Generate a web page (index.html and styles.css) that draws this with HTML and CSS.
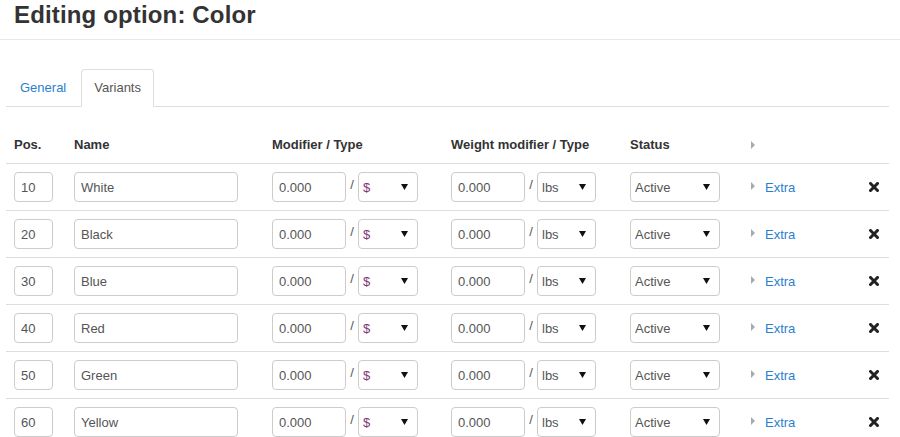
FILE: index.html
```html
<!DOCTYPE html>
<html lang="en">
<head>
<meta charset="utf-8">
<title>Editing option: Color</title>
<link rel="stylesheet" href="styles.css">
</head>
<body>
<header class="page-head">
  <h1 class="page-title">Editing option: Color</h1>
</header>
<main class="content">
  <ul class="tabs">
    <li class="tab"><a href="#" class="tab-link">General</a></li>
    <li class="tab active"><a href="#" class="tab-link">Variants</a></li>
  </ul>
  <table class="variants">
    <colgroup>
      <col class="c-pos"><col class="c-name"><col class="c-mod"><col class="c-wmod"><col class="c-status"><col class="c-extra"><col class="c-del">
    </colgroup>
    <thead>
      <tr>
        <th>Pos.</th>
        <th>Name</th>
        <th>Modifier / Type</th>
        <th>Weight modifier / Type</th>
        <th>Status</th>
        <th><span class="caret"></span></th>
        <th></th>
      </tr>
    </thead>
    <tbody>
      <tr>
        <td><input class="inp pos" value="10"></td>
        <td><input class="inp name" value="White"></td>
        <td><div class="pair"><input class="inp mod" value="0.000"><span class="slash">/</span><select class="sel cur"><option>$</option></select></div></td>
        <td><div class="pair"><input class="inp mod" value="0.000"><span class="slash">/</span><select class="sel unit"><option>lbs</option></select></div></td>
        <td><select class="sel status"><option>Active</option></select></td>
        <td><span class="caret"></span><a href="#" class="extra">Extra</a></td>
        <td><span class="del"><svg viewBox="0 0 10 10" width="10" height="10"><path d="M1.5 1.5L8.5 8.5M8.5 1.5L1.5 8.5" stroke="#222" stroke-width="3" stroke-linecap="square"/></svg></span></td>
      </tr>
      <tr>
        <td><input class="inp pos" value="20"></td>
        <td><input class="inp name" value="Black"></td>
        <td><div class="pair"><input class="inp mod" value="0.000"><span class="slash">/</span><select class="sel cur"><option>$</option></select></div></td>
        <td><div class="pair"><input class="inp mod" value="0.000"><span class="slash">/</span><select class="sel unit"><option>lbs</option></select></div></td>
        <td><select class="sel status"><option>Active</option></select></td>
        <td><span class="caret"></span><a href="#" class="extra">Extra</a></td>
        <td><span class="del"><svg viewBox="0 0 10 10" width="10" height="10"><path d="M1.5 1.5L8.5 8.5M8.5 1.5L1.5 8.5" stroke="#222" stroke-width="3" stroke-linecap="square"/></svg></span></td>
      </tr>
      <tr>
        <td><input class="inp pos" value="30"></td>
        <td><input class="inp name" value="Blue"></td>
        <td><div class="pair"><input class="inp mod" value="0.000"><span class="slash">/</span><select class="sel cur"><option>$</option></select></div></td>
        <td><div class="pair"><input class="inp mod" value="0.000"><span class="slash">/</span><select class="sel unit"><option>lbs</option></select></div></td>
        <td><select class="sel status"><option>Active</option></select></td>
        <td><span class="caret"></span><a href="#" class="extra">Extra</a></td>
        <td><span class="del"><svg viewBox="0 0 10 10" width="10" height="10"><path d="M1.5 1.5L8.5 8.5M8.5 1.5L1.5 8.5" stroke="#222" stroke-width="3" stroke-linecap="square"/></svg></span></td>
      </tr>
      <tr>
        <td><input class="inp pos" value="40"></td>
        <td><input class="inp name" value="Red"></td>
        <td><div class="pair"><input class="inp mod" value="0.000"><span class="slash">/</span><select class="sel cur"><option>$</option></select></div></td>
        <td><div class="pair"><input class="inp mod" value="0.000"><span class="slash">/</span><select class="sel unit"><option>lbs</option></select></div></td>
        <td><select class="sel status"><option>Active</option></select></td>
        <td><span class="caret"></span><a href="#" class="extra">Extra</a></td>
        <td><span class="del"><svg viewBox="0 0 10 10" width="10" height="10"><path d="M1.5 1.5L8.5 8.5M8.5 1.5L1.5 8.5" stroke="#222" stroke-width="3" stroke-linecap="square"/></svg></span></td>
      </tr>
      <tr>
        <td><input class="inp pos" value="50"></td>
        <td><input class="inp name" value="Green"></td>
        <td><div class="pair"><input class="inp mod" value="0.000"><span class="slash">/</span><select class="sel cur"><option>$</option></select></div></td>
        <td><div class="pair"><input class="inp mod" value="0.000"><span class="slash">/</span><select class="sel unit"><option>lbs</option></select></div></td>
        <td><select class="sel status"><option>Active</option></select></td>
        <td><span class="caret"></span><a href="#" class="extra">Extra</a></td>
        <td><span class="del"><svg viewBox="0 0 10 10" width="10" height="10"><path d="M1.5 1.5L8.5 8.5M8.5 1.5L1.5 8.5" stroke="#222" stroke-width="3" stroke-linecap="square"/></svg></span></td>
      </tr>
      <tr>
        <td><input class="inp pos" value="60"></td>
        <td><input class="inp name" value="Yellow"></td>
        <td><div class="pair"><input class="inp mod" value="0.000"><span class="slash">/</span><select class="sel cur"><option>$</option></select></div></td>
        <td><div class="pair"><input class="inp mod" value="0.000"><span class="slash">/</span><select class="sel unit"><option>lbs</option></select></div></td>
        <td><select class="sel status"><option>Active</option></select></td>
        <td><span class="caret"></span><a href="#" class="extra">Extra</a></td>
        <td><span class="del"><svg viewBox="0 0 10 10" width="10" height="10"><path d="M1.5 1.5L8.5 8.5M8.5 1.5L1.5 8.5" stroke="#222" stroke-width="3" stroke-linecap="square"/></svg></span></td>
      </tr>
    </tbody>
  </table>
</main>
</body>
</html>
```
FILE: styles.css
```css
html, body {
  margin: 0;
  padding: 0;
  background: #fff;
  font-family: "Liberation Sans", Arial, sans-serif;
  font-size: 13px;
  color: #333;
  overflow: hidden;
}
.page-head {
  height: 40px;
  border-bottom: 1px solid #e8e8e8;
  padding-left: 14px;
  box-sizing: border-box;
}
.page-title {
  margin: 0;
  font-size: 24px;
  line-height: 30px;
  font-weight: bold;
  color: #333;
  letter-spacing: 0.15px;
}
.content {
  width: 883px;
  margin-left: 6px;
}
.tabs {
  list-style: none;
  margin: 29px 0 0;
  padding: 0 0 0 1px;
  display: flex;
  border-bottom: 1px solid #ddd;
}
.tab {
  margin-bottom: -1px;
  margin-right: 2px;
}
.tab-link {
  display: block;
  padding: 8px 12px;
  line-height: 20px;
  border: 1px solid transparent;
  border-radius: 4px 4px 0 0;
  color: #2a7fd0;
  text-decoration: none;
}
.tab.active .tab-link {
  color: #555;
  border-color: #ddd #ddd transparent;
  background: #fff;
}
.variants {
  margin-top: 20px;
  width: 883px;
  border-collapse: collapse;
  table-layout: fixed;
}
.c-pos { width: 60px; }
.c-name { width: 198px; }
.c-mod { width: 179px; }
.c-wmod { width: 179px; }
.c-status { width: 121px; }
.c-extra { width: 118px; }
.c-del { width: 28px; }
.variants th {
  text-align: left;
  font-weight: bold;
  padding: 8px;
  line-height: 20px;
  color: #333;
}
.variants td {
  border-top: 1px solid #ddd;
  padding: 8px;
  line-height: 20px;
  vertical-align: middle;
  white-space: nowrap;
}
.inp {
  box-sizing: border-box;
  height: 30px;
  border: 1px solid #ccc;
  border-radius: 4px;
  padding: 0 6px;
  font-family: inherit;
  font-size: 13px;
  color: #555;
  background: #fff;
  display: block;
}
.pos { width: 39px; }
.name { width: 164px; }
.mod { width: 74px; }
.pair {
  display: flex;
  align-items: center;
}
.slash {
  width: 12px;
  text-align: center;
  color: #555;
  margin-top: -4px;
}
.sel {
  appearance: none;
  -webkit-appearance: none;
  box-sizing: border-box;
  height: 30px;
  border: 1px solid #ccc;
  border-radius: 4px;
  padding: 0 4px;
  font-family: inherit;
  font-size: 13px;
  color: #555;
  background: #fff url("data:image/svg+xml;utf8,<svg xmlns='http://www.w3.org/2000/svg' width='7' height='6'><path d='M0 0H7L3.5 6Z' fill='%23111'/></svg>") no-repeat right 9px center;
  display: block;
}
.cur { width: 60px; color: #7d3a72; }
.unit { width: 59px; }
.status { width: 90px; }
.caret {
  display: inline-block;
  width: 0;
  height: 0;
  border-top: 4px solid transparent;
  border-bottom: 4px solid transparent;
  border-left: 4px solid #aaa;
  vertical-align: middle;
  margin-right: 10px;
  margin-top: -2px;
}
.extra {
  color: #2a7fd0;
  text-decoration: none;
  vertical-align: middle;
}
.del {
  display: block;
  width: 10px;
  height: 10px;
}
.del svg { display: block; }
```
